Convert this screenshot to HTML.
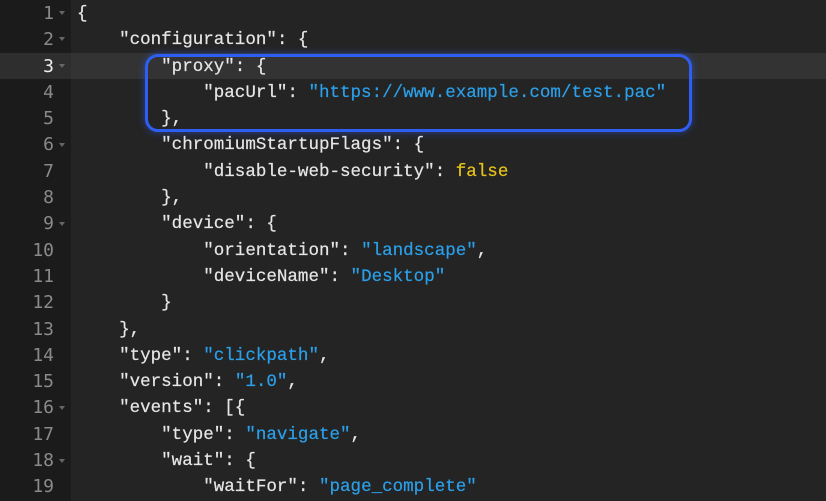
<!DOCTYPE html>
<html><head><style>
html,body{margin:0;padding:0;width:826px;height:501px;overflow:hidden;background:#242424;}
.g{position:absolute;left:0;top:0;width:71px;height:501px;background:#1b1b1b;}
.act{position:absolute;left:0;top:53px;width:826px;height:26px;background:#333333;}
.actg{position:absolute;left:0;top:53px;width:71px;height:26px;background:#2e2e2e;}
.ln{position:absolute;left:0;width:54px;text-align:right;font:18px "DejaVu Sans Mono","Liberation Mono",monospace;color:#8a8a8a;}
.f{position:absolute;left:59px;width:0;height:0;border-left:3px solid transparent;border-right:3px solid transparent;border-top:4px solid #666;}
.code{position:absolute;left:77px;top:1px;font:17.55px "Liberation Mono","DejaVu Sans Mono",monospace;color:#e6e6e6;white-space:pre;line-height:26.3px;-webkit-text-stroke:0.2px #e6e6e6;}
.s{color:#2ba0ea;-webkit-text-stroke:0.2px #2ba0ea}.b{color:#e6c21a;-webkit-text-stroke:0.2px #e6c21a}
.box{position:absolute;left:145px;top:54px;width:541px;height:72px;border:3px solid #2e5ff0;border-radius:13px;box-shadow:0 0 8px rgba(46,95,240,.55);}
</style></head><body>
<div class="g"></div>
<div class="act"></div><div class="actg"></div>
<div class="code">{
    "configuration": {
        "proxy": {
            "pacUrl": <span class="s">"https://www.example.com/test.pac"</span>
        },
        "chromiumStartupFlags": {
            "disable-web-security": <span class="b">false</span>
        },
        "device": {
            "orientation": <span class="s">"landscape"</span>,
            "deviceName": <span class="s">"Desktop"</span>
        }
    },
    "type": <span class="s">"clickpath"</span>,
    "version": <span class="s">"1.0"</span>,
    "events": [{
        "type": <span class="s">"navigate"</span>,
        "wait": {
            "waitFor": <span class="s">"page_complete"</span>
</div>
<div class="ln" style="top:1px;line-height:26.3px">1<br>2<br><span style="color:#eee">3</span><br>4<br>5<br>6<br>7<br>8<br>9<br>10<br>11<br>12<br>13<br>14<br>15<br>16<br>17<br>18<br>19</div>
<div class="f" style="top:11px"></div>
<div class="f" style="top:37px"></div>
<div class="f" style="top:64px"></div>
<div class="f" style="top:143px"></div>
<div class="f" style="top:222px"></div>
<div class="f" style="top:406px"></div>
<div class="f" style="top:459px"></div>
<div class="box"></div>
</body></html>
